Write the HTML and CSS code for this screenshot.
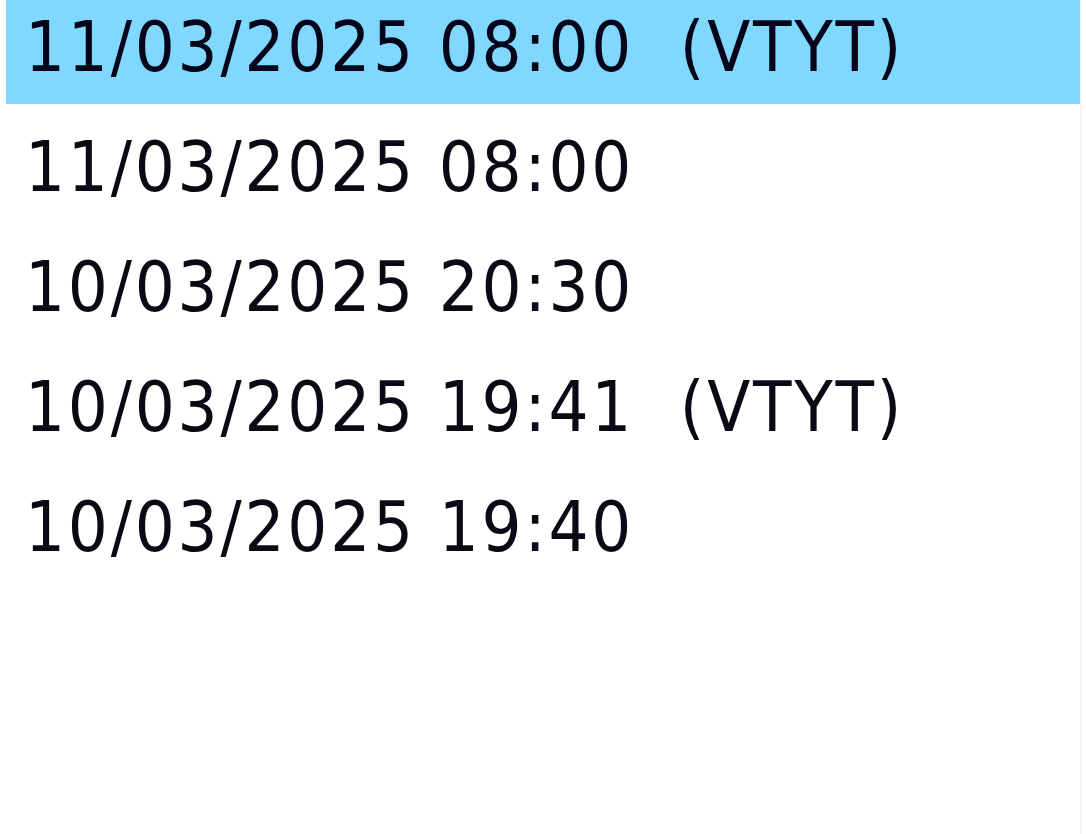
FILE: index.html
```html
<!DOCTYPE html>
<html>
<head>
<meta charset="utf-8">
<link rel="stylesheet" href="styles.css">
</head>
<body>
<div class="list">
  <div class="row selected">11/03/2025 08:00  (VTYT)</div>
  <div class="row">11/03/2025 08:00</div>
  <div class="row">10/03/2025 20:30</div>
  <div class="row">10/03/2025 19:41  (VTYT)</div>
  <div class="row">10/03/2025 19:40</div>
</div>
</body>
</html>
```
FILE: styles.css
```css
html, body {
  margin: 0;
  padding: 0;
  background: #ffffff;
  overflow: hidden;
}
.list {
  width: 1082px;
  height: 860px;
  margin-top: -16px;
  border-right: 2px solid #f2f6fb;
  box-sizing: border-box;
  padding-left: 6px;
}
.row {
  height: 120px;
  padding-top: 10px;
  line-height: 106px;
  padding-left: 19px;
  font-family: "DejaVu Sans Condensed", "DejaVu Sans", sans-serif;
  font-size: 70px;
  letter-spacing: 2.8px;
  color: #0a0a14;
  white-space: pre;
  box-sizing: border-box;
}
.row.selected {
  background: #80d8fe;
  color: #05051a;
}
```
